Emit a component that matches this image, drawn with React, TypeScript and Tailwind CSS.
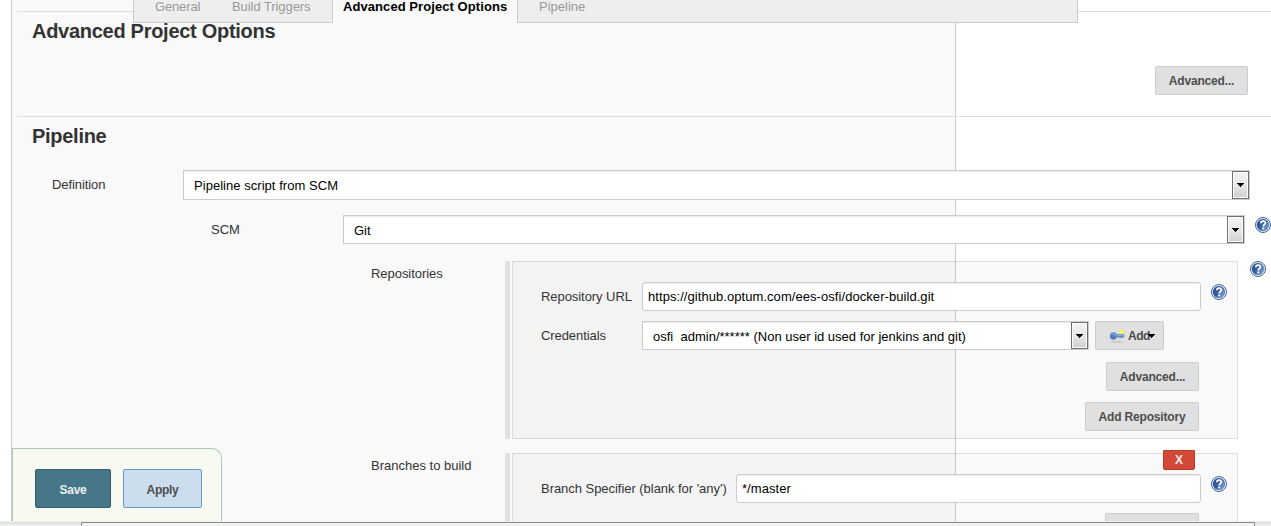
import React from "react";

function HelpIcon({ className = "" }: { className?: string }) {
  return (
    <svg viewBox="0 0 16 16" className={`block h-4 w-4 shrink-0 ${className}`}>
      <defs>
        <linearGradient id="help-fill" x1="0" y1="0.2" x2="1" y2="0.8">
          <stop offset="0" stopColor="#1f4486" />
          <stop offset="0.5" stopColor="#3b66a8" />
          <stop offset="1" stopColor="#86a8d6" />
        </linearGradient>
      </defs>
      <circle cx="8" cy="8" r="7.5" fill="#fff" stroke="#3f64a0" />
      <circle cx="8" cy="8" r="6.1" fill="url(#help-fill)" stroke="#2f5595" strokeWidth="0.3" />
      <path
        d="M5.8 6.3C5.8 4.9 6.7 4.1 8.1 4.1S10.4 4.9 10.4 6.1C10.4 7.5 8.2 7.6 8.2 9.6"
        fill="none"
        stroke="#fff"
        strokeWidth="1.8"
      />
      <rect x="7.2" y="10.5" width="2" height="1.8" fill="#fff" />
    </svg>
  );
}

function KeyIcon() {
  return (
    <svg viewBox="0 0 16 16" className="block h-4 w-4 shrink-0">
      <defs>
        <linearGradient id="key-fill" x1="0" y1="0" x2="0" y2="1">
          <stop offset="0" stopColor="#7da7d8" />
          <stop offset="1" stopColor="#3f72b4" />
        </linearGradient>
      </defs>
      <ellipse cx="8" cy="14" rx="6" ry="0.9" fill="#c9c9c9" />
      <path
        d="M4.5 4.5C6 4.5 7.2 5.4 7.8 6.6H14.8V9.2H13.6V8.8H12.4V9.7H10.8V9.1H7.8C7.2 10.5 6 11.4 4.5 11.4A3.45 3.45 0 0 1 4.5 4.5Z"
        fill="url(#key-fill)"
        stroke="#4877b1"
        strokeWidth="0.6"
      />
      <path d="M8 7.7H14" stroke="#a9c7e8" strokeWidth="0.7" />
      <circle cx="3.2" cy="8" r="0.7" fill="#3d649b" />
      <circle cx="12.4" cy="3.9" r="2.3" fill="#f7ef4c" />
      <circle cx="12.4" cy="3.9" r="0.9" fill="#fffcc0" />
    </svg>
  );
}

function Caret({ className = "" }: { className?: string }) {
  return (
    <svg viewBox="0 0 7 4" className={`block h-1 w-[7px] shrink-0 ${className}`} shapeRendering="crispEdges">
      <path d="M0 0H7V1H6V2H5V3H4V4H3V3H2V2H1V1H0Z" fill="#000" />
    </svg>
  );
}

function Select({ className, textClass = "pt-px", children }: { className: string; textClass?: string; children: React.ReactNode }) {
  return (
    <div className={`flex shrink-0 items-stretch border border-[#ccc] bg-white pl-2.5 text-black shadow-[inset_0_1px_1px_rgba(0,0,0,0.075)] ${className}`}>
      <span className={`flex flex-1 items-center whitespace-pre ${textClass}`}>{children}</span>
      <span className="flex w-[17px] items-center justify-center border border-[#707070] bg-linear-to-b from-[#f3f3f3] via-[#e8e8e8] to-[#cfcfcf] shadow-[inset_0_0_0_1px_#fcfcfc]">
        <Caret />
      </span>
    </div>
  );
}

function Input({ className, children }: { className: string; children: React.ReactNode }) {
  return (
    <div className={`flex h-[29px] shrink-0 items-center rounded-[3px] border border-[#ccc] bg-white pl-[5px] tracking-[0.06px] text-black shadow-[inset_0_1px_1px_rgba(0,0,0,0.075)] ${className}`}>
      {children}
    </div>
  );
}

function Button({ className, children }: { className: string; children?: React.ReactNode }) {
  return (
    <div className={`flex h-[29px] shrink-0 items-center justify-center rounded-[2px] border border-[#ccc] bg-[#e0e0e0] text-[12px] font-bold tracking-[-0.17px] text-[#4d4d4d] ${className}`}>
      {children}
    </div>
  );
}

function Handle() {
  return <div className="mr-0.5 w-[5px] shrink-0 bg-[#e0e0e0]" />;
}

export default function App() {
  return (
    <div className="relative h-[526px] w-[1271px] overflow-hidden bg-white font-['Liberation_Sans',Arial,sans-serif] text-[13px] leading-[16px] text-[#333]">
      <div className="absolute -top-1 left-[11px] h-[540px] w-[945px] border-x border-[#ccc] bg-[#f9f9f9]" />

      <main className="relative flex h-[521px] flex-col overflow-hidden pt-[11px]">
        <section className="ml-[17px] h-[105px] shrink-0 border-t border-[#ddd] pl-[15px]">
          <h2 className="pt-[7px] text-[20px] leading-[24px] font-bold tracking-[-0.28px] whitespace-nowrap">Advanced Project Options</h2>
          <div className="mt-[23px] mr-[23px] flex justify-end">
            <Button className="w-[93px]">Advanced...</Button>
          </div>
        </section>

        <section className="ml-[17px] shrink-0 border-t border-[#ddd]">
          <h2 className="h-[53px] pt-[7px] pl-[15px] text-[20px] leading-[24px] font-bold tracking-[-0.28px]">Pipeline</h2>

          <div className="flex h-[45px] pl-[35px]">
            <span className="w-[131px] pt-[7px] tracking-[-0.08px]">Definition</span>
            <Select className="h-[30px] w-[1067px]" textClass="pt-px tracking-[0.04px]">Pipeline script from SCM</Select>
          </div>

          <div className="flex h-[46px] pl-[194px]">
            <span className="w-[132px] pt-[7px]">SCM</span>
            <Select className="h-[29px] w-[902px]" textClass="pt-[3px]">Git</Select>
            <HelpIcon className="mt-0.5 ml-2.5" />
          </div>

          <div className="flex h-[178px] pl-[354px]">
            <span className="w-[134px] pt-[5px] tracking-[-0.05px]">Repositories</span>
            <Handle />
            <div className="flex w-[726px] shrink-0 flex-col border border-black/10 bg-black/[0.025] pt-5 pl-7">
              <div className="flex h-[39px]">
                <span className="w-[101px] pt-[7px] tracking-[-0.06px]">Repository URL</span>
                <Input className="w-[559px]">https://github.optum.com/ees-osfi/docker-build.git</Input>
                <HelpIcon className="mt-0.5 ml-2.5" />
              </div>
              <div className="flex h-[41px]">
                <span className="w-[101px] pt-[7px] tracking-[-0.08px]">Credentials</span>
                <Select className="h-[29px] w-[447px]" textClass="pt-[3px]">
                  osfi<span className="text-transparent">_</span>admin/****** (Non user id used for jenkins and git)
                </Select>
                <Button className="relative ml-1.5 w-[69px]">
                  <KeyIcon />
                  <span className="ml-[3px] tracking-[-0.4px]">Add</span>
                  <Caret className="absolute top-3 right-2" />
                </Button>
              </div>
              <div className="mr-[38px] flex flex-col items-end gap-[11px]">
                <Button className="w-[93px]">Advanced...</Button>
                <Button className="w-[114px]">Add Repository</Button>
              </div>
            </div>
            <HelpIcon className="ml-3" />
          </div>

          <div className="mt-[14px] flex h-[90px] pl-[354px]">
            <span className="w-[134px] pt-[5px]">Branches to build</span>
            <Handle />
            <div className="relative flex w-[726px] shrink-0 flex-col border border-black/10 bg-black/[0.025] pt-5 pl-7">
              <div className="absolute -top-1 right-[42px] flex h-5 w-8 items-center justify-center rounded-b-[2px] border border-[#c03a2b] bg-[#d34836] text-[12px] font-bold text-[#eee]">
                X
              </div>
              <div className="flex h-[39px]">
                <span className="w-[195px] pt-[7px] tracking-[-0.04px] whitespace-nowrap">Branch Specifier (blank for 'any')</span>
                <Input className="w-[465px]">*/master</Input>
                <HelpIcon className="mt-0.5 ml-2.5" />
              </div>
              <div className="mr-[38px] flex justify-end">
                <Button className="w-[94px]" />
              </div>
            </div>
          </div>
        </section>
      </main>

      <nav className="absolute top-0 left-[133px] flex h-[23px] w-[945px] leading-[14px] text-[#999]">
        <div className="flex w-[200px] border-x border-b border-[#ccc] bg-[#eee] pl-[21px]">
          <span className="w-[77px] tracking-[-0.15px]">General</span>
          <span className="tracking-[-0.07px] whitespace-nowrap">Build Triggers</span>
        </div>
        <div className="w-[184px] bg-[#f9f9f9] pl-[10px] font-bold tracking-[0.07px] whitespace-nowrap text-black">Advanced Project Options</div>
        <div className="flex-1 border-x border-b border-[#ccc] bg-[#eee] pl-[21px]">Pipeline</div>
      </nav>

      <div className="absolute top-[448px] left-[12px] flex h-[73px] w-[210px] gap-3 rounded-tr-[10px] border-x border-t border-[#a9cdb9] bg-[#f8f9f1] pt-5 pl-[22px] text-[12px] font-bold tracking-[-0.3px]">
        <div className="flex h-[39px] w-[76px] items-center justify-center rounded-[2px] border border-[#355f70] bg-[#457788] pt-0.5 text-[#eee]">Save</div>
        <div className="flex h-[39px] w-[79px] items-center justify-center rounded-[2px] border border-[#6699cc] bg-[#ccdded] pt-0.5 text-[#4d4d4d]">Apply</div>
      </div>

      <footer className="absolute top-[521px] left-0 flex h-[5px] w-full border-t border-[#f0f0f0] bg-linear-to-b from-[#dedede] to-[#f0f0f0] pl-[81px]">
        <div className="w-[1174px] rounded-t-[1px] border-x border-t border-[#8c8c8c] bg-[#f2f2f2]" />
      </footer>
    </div>
  );
}
